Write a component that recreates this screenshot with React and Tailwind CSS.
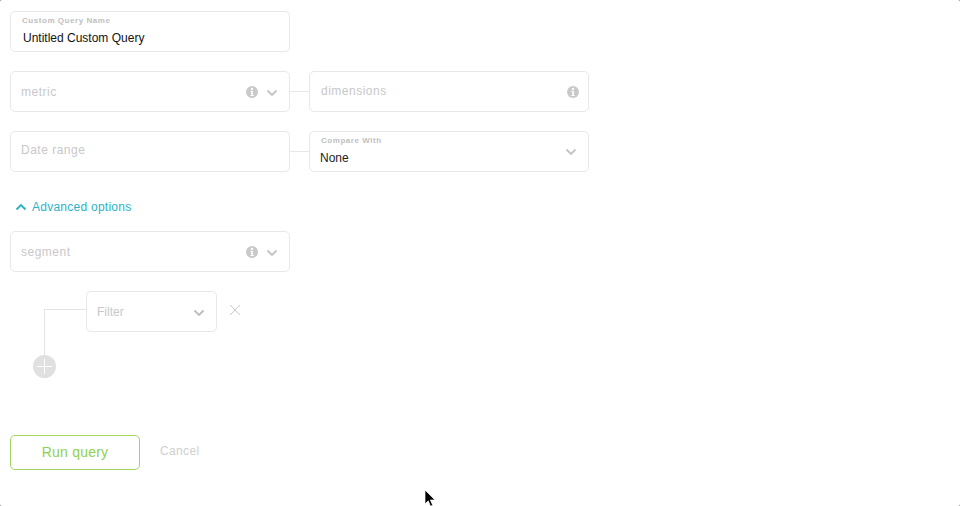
import React from 'react'

const border = 'border border-[#e8e8e8] rounded-[5px] bg-white'

function Info() {
  return (
    <svg width="12" height="12" viewBox="0 0 12 12" className="shrink-0">
      <circle cx="6" cy="6" r="6" fill="#c9c9c9" />
      <circle cx="6" cy="3" r="1.2" fill="#fff" />
      <path d="M4.4 5h2.5v3.9h.8V10H4.4V8.9h.9V6.1h-.9z" fill="#fff" />
    </svg>
  )
}

function Chevron({ up, color = '#c4c4c4', width = 1.9 }) {
  return (
    <svg width="12" height="8" viewBox="0 0 12 8" fill="none" className="shrink-0">
      <path d={up ? 'M1.5 6.5 6 2l4.5 4.5' : 'M1.5 1.5 6 6l4.5-4.5'} stroke={color} strokeWidth={width} />
    </svg>
  )
}

function Placeholder({ children, className = '' }) {
  return <span className={`text-[12px] leading-none tracking-[0.5px] text-[#c8c8c8] ${className}`}>{children}</span>
}

function SelectField({ label, info, chevron = true, labelClass = '' }) {
  return (
    <div className={`${border} w-[280px] h-[41px] flex items-center pl-[10px] pr-[11px] shrink-0`}>
      <Placeholder className={`flex-1 ${labelClass}`}>{label}</Placeholder>
      {info && <Info />}
      {chevron && (
        <span className="ml-[8px] mt-[3px]">
          <Chevron />
        </span>
      )}
    </div>
  )
}

function Connector() {
  return <div className="w-[19px] h-px bg-[#e8e8e8] shrink-0" />
}

function Cursor() {
  return (
    <svg width="13" height="19" viewBox="0 0 13 19" className="absolute left-[424px] top-[489px]">
      <path d="M1 1v14l3.2-3.2 2.3 5.4 2.2-1-2.3-5.2H11z" fill="#000" stroke="#fff" strokeWidth="0.7" />
    </svg>
  )
}

export default function App() {
  return (
    <div className="w-[960px] h-[506px] bg-[#8a8a8a] overflow-hidden">
      <div className="relative w-[960px] h-[506px] bg-white rounded-[2px] overflow-hidden pl-[10px] pt-[11px] font-['Liberation_Sans',Arial,sans-serif]">
        <div className={`${border} w-[280px] h-[41px] pl-[11px] pt-[4px] mb-[19px]`}>
          <div className="text-[8px] leading-[10px] font-bold tracking-[0.55px] text-[#c0c0c0]">Custom Query Name</div>
          <div className="text-[12px] leading-[14px] mt-[5px] ml-px text-[#111]">Untitled Custom Query</div>
        </div>

        <div className="flex items-center mb-[19px]">
          <SelectField label="metric" info />
          <Connector />
          <div className={`${border} w-[280px] h-[41px] flex items-center pl-[11px] pr-[9px]`}>
            <Placeholder className="flex-1 -mt-[2px]">dimensions</Placeholder>
            <Info />
          </div>
        </div>

        <div className="flex items-center">
          <SelectField label="Date range" chevron={false} labelClass="-mt-[4px]" />
          <Connector />
          <div className={`${border} w-[280px] h-[41px] flex items-center pl-[10px] pr-[11px]`}>
            <div className="flex-1">
              <div className="text-[8px] leading-[10px] font-bold tracking-[0.55px] text-[#c0c0c0] -mt-[3px] ml-px">Compare With</div>
              <div className="text-[12px] leading-[14px] mt-[5px] text-[#222]">None</div>
            </div>
            <Chevron />
          </div>
        </div>

        <div className="flex items-center gap-[5px] h-[14px] mt-[28px] mb-[17px] pl-[5px] text-[12px] tracking-[0.25px] text-[#2bb3c4]">
          <Chevron up color="#2bb3c4" />
          <span>Advanced options</span>
        </div>

        <SelectField label="segment" info />

        <div className="relative mt-[19px] ml-[76px] flex items-start h-[41px]">
          <div className={`${border} w-[131px] h-[41px] flex items-center pl-[10px] pr-[11px]`}>
            <Placeholder className="flex-1 tracking-normal">Filter</Placeholder>
            <span className="mt-[3px]">
              <Chevron color="#bdbdbd" />
            </span>
          </div>
          <svg width="12" height="12" viewBox="0 0 12 12" className="ml-[12px] mt-[13px]">
            <path d="M1 1l10 10M11 1 1 11" stroke="#c8c8c8" strokeWidth="1" />
          </svg>
          <div className="absolute left-[-42px] top-[18px] w-[42px] h-[50px] border-l border-t border-[#e4e4e4]" />
          <div className="absolute left-[-53px] top-[64px] w-[23px] h-[23px] rounded-full bg-[#e0e0e0] flex items-center justify-center">
            <svg width="15" height="15" viewBox="0 0 15 15">
              <path d="M7.5 0v15M0 7.5h15" stroke="#fff" strokeWidth="1" />
            </svg>
          </div>
        </div>

        <div className="flex items-center mt-[103px]">
          <button className="w-[130px] h-[35px] rounded-[5px] border border-[#a3d65f] text-[14px] tracking-[0.2px] text-[#8fd14f] bg-white">
            Run query
          </button>
          <span className="ml-[20px] -mt-[4px] text-[12px] tracking-[0.35px] text-[#cfcfcf]">Cancel</span>
        </div>

        <Cursor />
      </div>
    </div>
  )
}
